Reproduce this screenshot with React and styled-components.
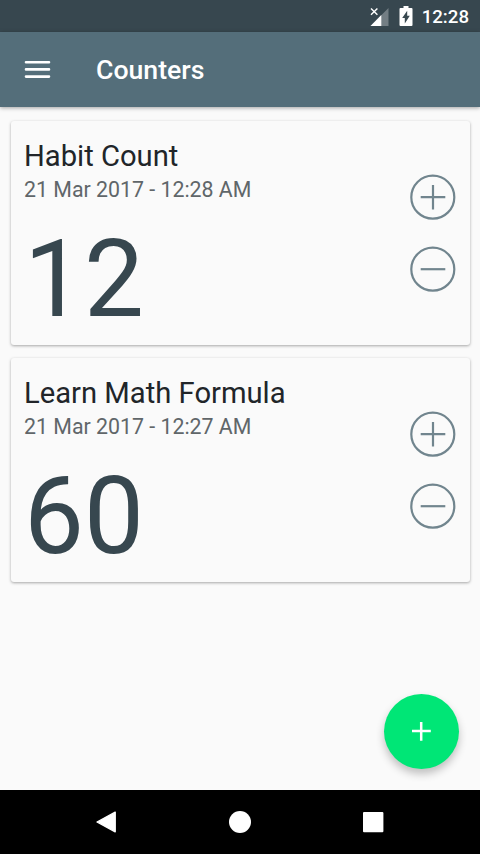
import styled, { createGlobalStyle } from "styled-components";

const GlobalStyle = createGlobalStyle`
  * {
    box-sizing: border-box;
    margin: 0;
    padding: 0;
  }

  body {
    font-family: Roboto, "Liberation Sans", sans-serif;
    background: #fafafa;
    overflow: hidden;
  }

  button {
    border: 0;
    background: none;
    cursor: pointer;
  }

  svg {
    display: block;
  }
`;

const Screen = styled.div`
  position: relative;
  display: flex;
  flex-direction: column;
  width: 480px;
  height: 854px;
  background: #fafafa;
`;

const StatusBar = styled.div`
  display: flex;
  align-items: center;
  justify-content: flex-end;
  height: 32px;
  padding-right: 11px;
  background: #37474f;
`;

const BatteryIcon = styled.svg`
  margin-left: 10px;
`;

const Clock = styled.span`
  margin-left: 9px;
  padding-top: 2px;
  font-size: 18.67px;
  font-weight: 500;
  line-height: 22px;
  color: #fff;
`;

const AppBar = styled.header`
  position: relative;
  display: flex;
  align-items: center;
  height: 75px;
  padding-left: 24px;
  background: #546e7a;
  box-shadow: 0 1px 4px rgba(0, 0, 0, 0.35);
`;

const MenuBtn = styled.button`
  width: 27px;
  height: 20px;
`;

const Title = styled.h1`
  margin-left: 45px;
  padding-top: 1px;
  font-size: 26.67px;
  font-weight: 500;
  line-height: 32px;
  color: #fff;
`;

const List = styled.main`
  flex: 1;
  display: flex;
  flex-direction: column;
  gap: 13px;
  padding: 14px 10.5px 0;
`;

const Card = styled.article`
  display: flex;
  align-items: center;
  justify-content: space-between;
  height: 224px;
  padding: 0 13.5px;
  border-radius: 3px;
  background: #fafafa;
  box-shadow: 0 1px 3px rgba(0, 0, 0, 0.34);
`;

const Info = styled.div`
  align-self: flex-start;
  padding-top: 16px;
`;

const Name = styled.h2`
  font-size: 29.2px;
  font-weight: 400;
  line-height: 38px;
  color: #212529;
`;

const DateText = styled.p`
  font-size: 21.33px;
  line-height: 29px;
  color: #606669;
`;

const Count = styled.p`
  margin-top: 13px;
  font-size: 106.67px;
  line-height: 126px;
  color: #37474f;
`;

const Actions = styled.div`
  display: flex;
  flex-direction: column;
  gap: 26px;
`;

const RoundBtn = styled.button`
  width: 46px;
  height: 46px;
`;

const Fab = styled.button`
  position: absolute;
  right: 21px;
  bottom: 85px;
  display: flex;
  align-items: center;
  justify-content: center;
  width: 75px;
  height: 75px;
  border-radius: 50%;
  background: #00e676;
  box-shadow: 0 5px 9px rgba(0, 0, 0, 0.24);
`;

const NavBar = styled.nav`
  display: flex;
  align-items: center;
  justify-content: center;
  gap: 111px;
  height: 64px;
  background: #000;
`;

const counters = [
  { name: "Habit Count", date: "21 Mar 2017 - 12:28 AM", count: 12 },
  { name: "Learn Math Formula", date: "21 Mar 2017 - 12:27 AM", count: 60 },
];

const CircleIcon = ({ plus }) => (
  <svg width="46" height="46" fill="none" stroke="#71858e" strokeWidth="2.2">
    <circle cx="22.8" cy="23.2" r="21.5" />
    <path d={plus ? "M10.7 23.2h24.6M23 11v24.5" : "M10.7 23.2h24.6"} />
  </svg>
);

const CounterCard = ({ name, date, count }) => {
  return (
    <Card>
      <Info>
        <Name>{name}</Name>
        <DateText>{date}</DateText>
        <Count>{count}</Count>
      </Info>
      <Actions>
        <RoundBtn aria-label="Increase">
          <CircleIcon plus />
        </RoundBtn>
        <RoundBtn aria-label="Decrease">
          <CircleIcon />
        </RoundBtn>
      </Actions>
    </Card>
  );
};

const App = () => {
  return (
    <Screen>
      <GlobalStyle />
      <StatusBar>
        <svg width="19" height="19" viewBox="0 0 19 19">
          <path d="M18.5 1v18H0.5z" fill="#fff" fillOpacity="0.3" />
          <path d="M11.3 8V19H0.5z" fill="#fff" />
          <path d="M0 0h8.6v9.2H0z" fill="#37474f" />
          <path d="M1 1.4l6.4 6.4M7.4 1.4L1 7.8" stroke="#fff" strokeWidth="1.4" />
        </svg>
        <BatteryIcon width="14" height="20" viewBox="0 0 14 20">
          <path d="M4.5 0h5v2h3a1 1 0 0 1 1 1v16a1 1 0 0 1-1 1H1.5a1 1 0 0 1-1-1V3a1 1 0 0 1 1-1h3z" fill="#fff" />
          <path d="M8.2 4.8v5h2.6l-5 7.6v-5.3H3.2z" fill="#37474f" />
        </BatteryIcon>
        <Clock>12:28</Clock>
      </StatusBar>
      <AppBar>
        <MenuBtn aria-label="Menu">
          <svg width="27" height="20" viewBox="0 0 27 20">
            <path
              d="M2 2.2h23M2 9.4h23M2 16.6h23"
              stroke="#fff"
              strokeWidth="2.6"
              strokeLinecap="round"
            />
          </svg>
        </MenuBtn>
        <Title>Counters</Title>
      </AppBar>
      <List>
        {counters.map((counter) => (
          <CounterCard key={counter.name} {...counter} />
        ))}
      </List>
      <NavBar>
        <svg width="22" height="22">
          <path d="M19.2 1.2v19.6L1 11z" fill="#fff" stroke="#fff" strokeWidth="1.4" strokeLinejoin="round" />
        </svg>
        <svg width="22" height="22">
          <circle cx="11" cy="11" r="11" fill="#fff" />
        </svg>
        <svg width="22" height="22">
          <rect x="1" y="0.9" width="20.4" height="20.4" rx="1" fill="#fff" />
        </svg>
      </NavBar>
      <Fab aria-label="Add counter">
        <svg width="19" height="19">
          <path d="M0 9h18.8M9.2 0v18.8" stroke="#fff" strokeWidth="2.5" />
        </svg>
      </Fab>
    </Screen>
  );
};

export default App;
